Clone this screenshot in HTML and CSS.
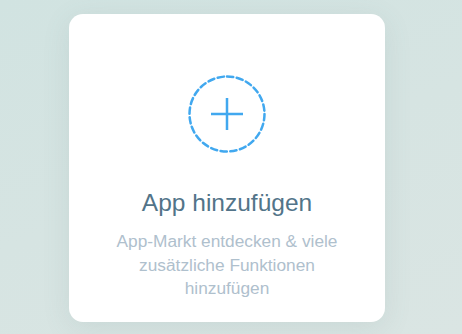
FILE: index.html
```html
<!DOCTYPE html>
<html lang="de">
<head>
<meta charset="utf-8">
<link rel="stylesheet" href="styles.css">
</head>
<body>
<div class="page">
  <div class="card">
    <svg class="add-icon" width="78" height="78" viewBox="0 0 78 78" aria-hidden="true">
      <circle cx="39" cy="39" r="37.5" fill="none" stroke="#41a8ef" stroke-width="2.5" stroke-dasharray="6.3 3.517" stroke-linecap="round" transform="rotate(-90 39 39)"/>
      <path d="M23 39H55M39 23V55" stroke="#41a8ef" stroke-width="2.5" fill="none"/>
    </svg>
    <h2 class="title">App hinzufügen</h2>
    <p class="desc">App-Markt entdecken &amp; viele zusätzliche Funktionen hinzufügen</p>
  </div>
</div>
</body>
</html>
```
FILE: styles.css
```css
html, body {
  margin: 0;
  padding: 0;
}
body {
  width: 462px;
  height: 334px;
  overflow: hidden;
  background: linear-gradient(160deg, #d1e3e1 0%, #d6e4e2 50%, #dae5e3 100%);
  font-family: "Liberation Sans", Arial, sans-serif;
}
.page {
  padding: 14px 0 0 69px;
}
.card {
  width: 316px;
  height: 308px;
  box-sizing: border-box;
  background: #ffffff;
  border-radius: 14px;
  box-shadow: 0 6px 28px rgba(90, 120, 120, 0.12);
  display: flex;
  flex-direction: column;
  align-items: center;
  padding-top: 61px;
}
.add-icon {
  display: block;
  flex: none;
}
.title {
  margin: 35px 0 0;
  font-size: 24.5px;
  line-height: 30px;
  font-weight: normal;
  color: #527489;
}
.desc {
  margin: 12px 0 0;
  width: 240px;
  text-align: center;
  font-size: 17.3px;
  line-height: 23.5px;
  color: #afc0cd;
}
```
